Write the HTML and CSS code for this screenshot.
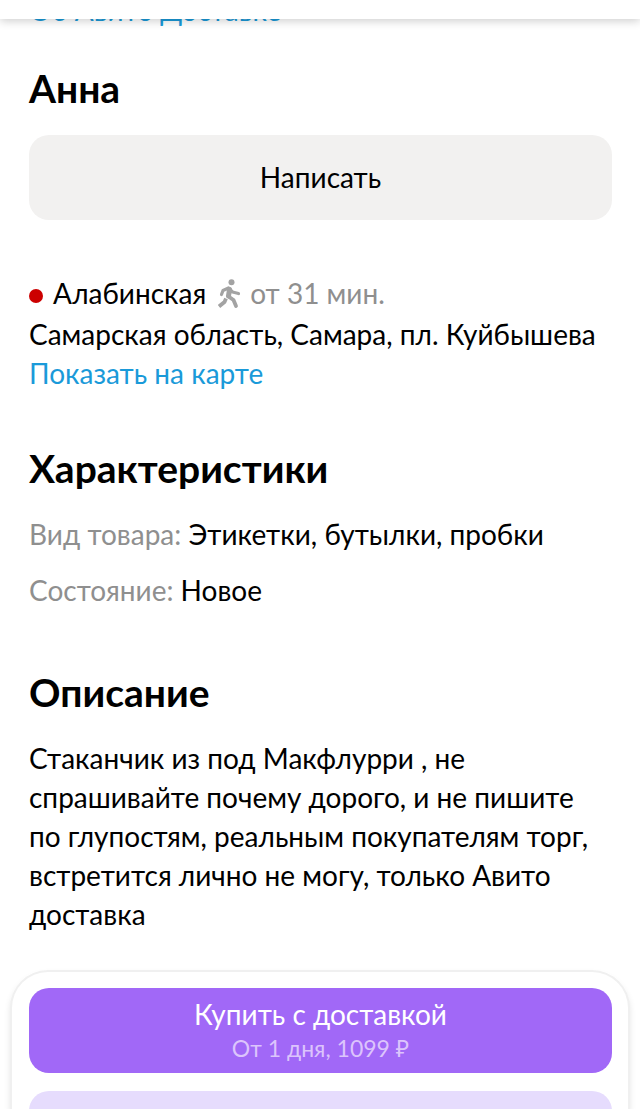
FILE: index.html
```html
<!DOCTYPE html>
<html lang="ru">
  <head>
    <meta charset="utf-8">
    <meta name="viewport" content="width=device-width, initial-scale=1">
    <title>Объявление</title>
    <link rel="stylesheet" href="styles.css">
  </head>
  <body>
    <header class="top-bar"></header>

    <main class="item">
      <a class="delivery-link" href="#">Об Авито Доставке</a>

      <section class="seller">
        <h2>Анна</h2>
        <button class="btn btn-write">Написать</button>
      </section>

      <section class="address">
        <p class="metro">
          <span class="metro-dot"></span>
          <span>Алабинская</span>
          <svg class="walk" viewBox="0 0 24 30" fill="none" stroke="#a3a3a3" stroke-linecap="round" stroke-linejoin="round">
            <circle cx="13.5" cy="3.2" r="3" fill="#a3a3a3" stroke="none" />
            <path stroke-width="3.2" d="M3.5 15.5L5 11.5L10.5 9L14.5 13L20.5 14.5" />
            <path stroke-width="5" d="M11.5 10.5L10.5 17" />
            <path stroke-width="3.8" d="M10.5 17.5L15.5 21L18 27" />
            <path stroke-width="3.8" stroke-linecap="butt" d="M8 19.5L6.5 23L1 27.5" />
          </svg>
          <span class="muted">от 31 мин.</span>
        </p>
        <p class="street">Самарская область, Самара, пл. Куйбышева</p>
        <a class="map-link" href="#">Показать на карте</a>
      </section>

      <section class="params">
        <h2>Характеристики</h2>
        <p><span class="muted">Вид товара:</span> Этикетки, бутылки, пробки</p>
        <p><span class="muted">Состояние:</span> Новое</p>
      </section>

      <section class="description">
        <h2>Описание</h2>
        <p>Стаканчик из под Макфлурри , не спрашивайте почему дорого, и не пишите по глупостям, реальным покупателям торг, встретится лично не могу, только Авито доставка</p>
      </section>
    </main>

    <div class="buy-panel">
      <button class="btn btn-buy">
        <span>Купить с доставкой</span>
        <small>От 1 дня, 1099 ₽</small>
      </button>
      <button class="btn btn-cart" aria-label="Добавить в корзину"></button>
    </div>
  </body>
</html>
```

FILE: styles.css
```css
* {
  box-sizing: border-box;
}

body {
  margin: 0;
  height: 100vh;
  overflow: hidden;
  background: #fff;
  color: #000;
  font-family: Lato, "Noto Sans", sans-serif;
  font-size: 28px;
  line-height: 39px;
}

h2,
p {
  margin: 0;
}

h2 {
  font-size: 39px;
  line-height: 48px;
  font-weight: bold;
}

a {
  color: #1a9ad9;
  text-decoration: none;
}

.muted {
  color: #8f8f8f;
}

.top-bar {
  position: fixed;
  top: 0;
  left: 0;
  right: 0;
  z-index: 1;
  height: 19px;
  background: #fff;
  box-shadow: 0 2px 10px rgba(0, 0, 0, 0.2);
}

.item {
  padding: 0 28px 0 29px;
}

.delivery-link {
  display: block;
  margin-top: -9px;
  padding-bottom: 34px;
}

.seller {
  margin-bottom: 54px;
}

.seller h2 {
  margin-bottom: 23px;
}

.btn {
  display: block;
  width: 100%;
  border: 0;
  border-radius: 20px;
  font: inherit;
  cursor: pointer;
}

.btn-write {
  height: 85px;
  background: #f2f1f0;
  color: #000;
}

.metro {
  display: flex;
  align-items: center;
  gap: 10px;
  margin-bottom: 2px;
}

.metro-dot {
  width: 14px;
  height: 14px;
  margin-top: 4px;
  border-radius: 50%;
  background: #cc0000;
}

.walk {
  width: 24px;
  height: 30px;
  margin-right: -2px;
  margin-left: 2px;
}

.address {
  margin-bottom: 51px;
}

.params {
  margin-bottom: 58px;
}

.params h2,
.description h2 {
  margin-bottom: 23px;
}

.params p + p {
  margin-top: 17px;
}

.description {
  padding-right: 12px;
}

.buy-panel {
  position: fixed;
  left: 10px;
  right: 10px;
  bottom: 0;
  height: 139px;
  overflow: hidden;
  padding: 16px 16px 0 17px;
  border: 2px solid #f0f0f0;
  border-bottom: 0;
  border-radius: 38px 38px 0 0;
  background: #fff;
  box-shadow: 0 4px 6px rgba(0, 0, 0, 0.1);
}

.btn-buy {
  height: 85px;
  padding-bottom: 5px;
  margin-bottom: 18px;
  background: #a168f7;
  color: #fff;
}

.btn-buy span,
.btn-buy small {
  display: block;
}

.btn-buy small {
  font-size: 23px;
  line-height: 28px;
  color: #dcc4fc;
}

.btn-cart {
  height: 85px;
  background: #e6dcfd;
}
```
